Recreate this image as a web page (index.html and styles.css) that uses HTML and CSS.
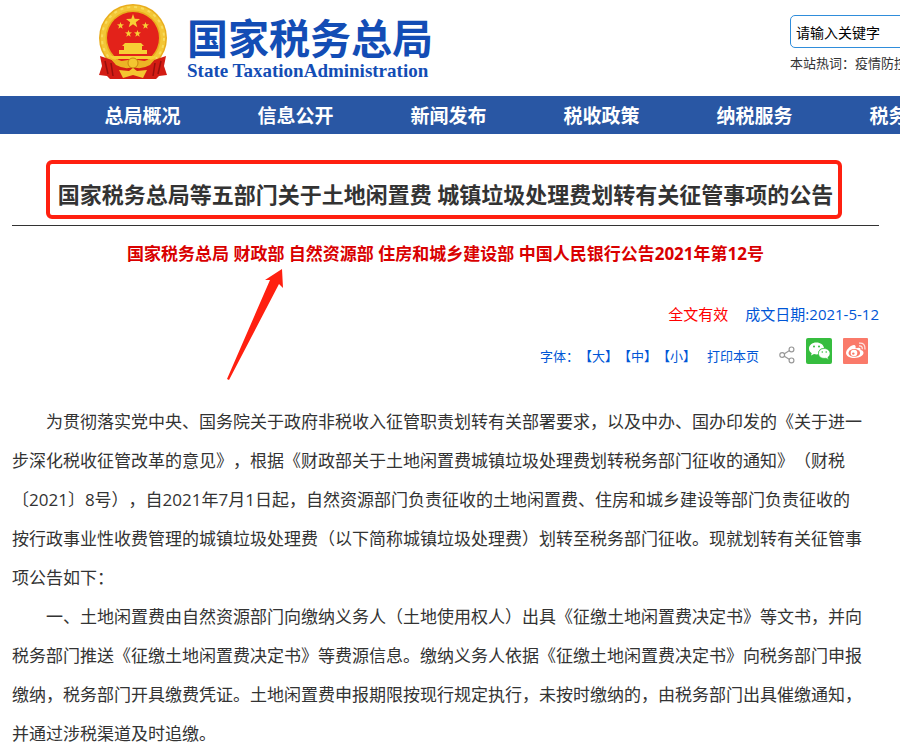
FILE: index.html
```html
<!doctype html>
<html lang="zh-CN">

<head>
  <meta charset="UTF-8">
  <meta name="viewport" content="width=device-width, initial-scale=1">
  <title>国家税务总局</title>
  <link rel="stylesheet" href="styles.css">
</head>

<body>
  <header class="header">
    <a class="logo" href="#">
      <svg class="emblem" viewBox="0 0 70 75" width="70" height="75" aria-hidden="true">
        <circle cx="35" cy="34" r="34" fill="#e9ad1d" />
        <circle cx="35" cy="34" r="30" fill="none" stroke="#f3c636" stroke-width="5" />
        <circle cx="35" cy="34" r="31" fill="none" stroke="#f8dc5c" stroke-width="2" stroke-dasharray="3 4" />
        <circle cx="35" cy="34" r="26" fill="#e3221a" />
        <g fill="#f7cf35">
          <path id="star" d="M35 10 L36.700 14.700 L42 15 L37.800 18.200 L39.300 23.300 L35 20.300 L30.700 23.300 L32.200 18.200 L28 15 L33.300 14.700 Z" />
          <use href="#star" transform="translate(5 13) scale(.5)" />
          <use href="#star" transform="translate(30 13) scale(.5)" />
          <use href="#star" transform="translate(13 21) scale(.5)" />
          <use href="#star" transform="translate(22 21) scale(.5)" />
          <path d="M27 39 H43 L46 42 H44 V46 H49 V50 H21 V46 H26 V42 H24 Z" />
          <path d="M12 52 H58 L56 55 H14 Z" />
        </g>
        <path d="M2 52 L14 56 Q22 63 35 61 Q48 63 56 56 L68 52 L66 62 L69 71 L61 72 L58 75 H12 L9 72 L1 71 L4 62 Z" fill="#d31c14" />
        <path d="M7 57 L10 70 M13 59 L15 72 M63 57 L60 70 M57 59 L55 72" stroke="#960f0d" stroke-width="1.500" fill="none" />
        <path d="M12 54 Q24 60 35 54 Q46 60 58 54 L52 61 Q43 66 35 63 Q27 66 18 61 Z" fill="#ecb425" />
        <circle cx="35" cy="59" r="5" fill="#f4c630" stroke="#c98510" />
        <path d="M21 66 L31 67 L35 64 L39 67 L49 66 L45 74 L35 71 L25 74 Z" fill="#f4c630" />
      </svg>
      <span class="logo-text">
        <span class="logo-cn">国家税务总局</span>
        <span class="logo-en">State TaxationAdministration</span>
      </span>
    </a>
    <form class="search">
      <input class="search-input" type="text" value="请输入关键字" aria-label="关键字">
      <p class="hot">本站热词：<a href="#">疫情防控</a></p>
    </form>
  </header>

  <nav class="nav">
    <a href="#">总局概况</a>
    <a href="#">信息公开</a>
    <a href="#">新闻发布</a>
    <a href="#">税收政策</a>
    <a href="#">纳税服务</a>
    <a href="#">税务文化</a>
  </nav>

  <article class="article">
    <h1 class="title">国家税务总局等五部门关于土地闲置费 城镇垃圾处理费划转有关征管事项的公告</h1>
    <h2 class="number">国家税务总局 财政部 自然资源部 住房和城乡建设部 中国人民银行公告2021年第12号
      <svg class="arrow" viewBox="0 0 58 112" width="58" height="112" aria-hidden="true">
        <path d="M0 110 L43 11 L38 11 L55 0 L56 19 L52 15 L2 111 Z" fill="#ff2010" />
      </svg>
    </h2>
    <p class="meta"><span class="valid">全文有效</span><span>成文日期:2021-5-12</span></p>
    <div class="tools">
      <div class="size">字体：<button type="button">【大】</button><button type="button">【中】</button><button type="button">【小】</button></div>
      <button type="button" class="print">打印本页</button>
      <a class="share" href="#" aria-label="分享">
        <svg viewBox="0 0 16 18" width="16" height="18" fill="none" stroke="#999" stroke-width="1.2">
          <path d="M5 8 L10.500 4.500 M5 10 L10.500 13.500" />
          <circle cx="3.200" cy="9" r="2.400" />
          <circle cx="12.500" cy="3.400" r="2.400" />
          <circle cx="12.500" cy="14.400" r="2.400" />
        </svg>
      </a>
      <a class="wechat" href="#" aria-label="微信">
        <svg viewBox="0 0 26 26" width="26" height="26">
          <rect width="26" height="26" rx="2" fill="#36bd3f" />
          <path d="M10.500 4.500 C6 4.500 3 7.200 3 10.500 C3 12.500 4 14 5.700 15.200 L5 17.500 L8 16 Q10 16.600 12 16.300 C12 12 15 10 18 10 C17.500 6.800 14.500 4.500 10.500 4.500 Z" fill="#fff" />
          <path d="M18 10.500 C14.800 10.500 12.500 12.700 12.500 15.500 C12.500 18.500 15.500 21 20 20.200 L22.400 21.400 L21.900 19.300 C23.200 18.300 24 17 24 15.500 C24 12.700 21.300 10.500 18 10.500 Z" fill="#fff" stroke="#36bd3f" stroke-width=".6" />
          <g fill="#36bd3f"><circle cx="8" cy="8.500" r="1" /><circle cx="13" cy="8.500" r="1" /><circle cx="16.300" cy="14" r=".8" /><circle cx="20.200" cy="14" r=".8" /></g>
        </svg>
      </a>
      <a class="weibo" href="#" aria-label="微博">
        <svg viewBox="0 0 25 26" width="25" height="26">
          <rect width="25" height="26" rx="1" fill="#fa7a6a" />
          <path d="M11 7 C8 7 3 11.500 3 15 C3 18 7 20 11.500 20 C17 20 20.500 17.500 20.500 14.800 C20.500 13 19 12.400 17.500 12 C18 10 17 8.800 12.500 10.300 C13 8.500 12.500 7 11 7 Z" fill="#fff" />
          <ellipse cx="11.300" cy="14.900" rx="5.800" ry="3.900" fill="#fa7a6a" />
          <circle cx="11" cy="15" r="3.300" fill="#fff" />
          <circle cx="10.300" cy="15.600" r="1.200" fill="#fa7a6a" />
          <path d="M16 8 Q19.500 7.500 19.300 11.200 M16 5.200 Q22.500 4.500 22 11.500" fill="none" stroke="#fff" stroke-opacity=".8" stroke-width="1.300" />
        </svg>
      </a>
    </div>
    <div class="content">
      <p>为贯彻落实党中央、国务院关于政府非税收入征管职责划转有关部署要求，以及中办、国办印发的《关于进一步深化税收征管改革的意见》，根据《财政部关于土地闲置费城镇垃圾处理费划转税务部门征收的通知》（财税〔2021〕8号），自2021年7月1日起，自然资源部门负责征收的土地闲置费、住房和城乡建设等部门负责征收的按行政事业性收费管理的城镇垃圾处理费（以下简称城镇垃圾处理费）划转至税务部门征收。现就划转有关征管事项公告如下：</p>
      <p>一、土地闲置费由自然资源部门向缴纳义务人（土地使用权人）出具《征缴土地闲置费决定书》等文书，并向税务部门推送《征缴土地闲置费决定书》等费源信息。缴纳义务人依据《征缴土地闲置费决定书》向税务部门申报缴纳，税务部门开具缴费凭证。土地闲置费申报期限按现行规定执行，未按时缴纳的，由税务部门出具催缴通知，并通过涉税渠道及时追缴。</p>
    </div>
  </article>
</body>

</html>
```

FILE: styles.css
```css
* {
  box-sizing: border-box;
}

body {
  margin: 0;
  overflow-x: hidden;
  background: #fff;
  color: #333;
  font-family: "Open Sans", "Noto Sans CJK SC", sans-serif;
  text-spacing-trim: space-all;
}

h1,
h2,
p {
  margin: 0;
}

a {
  color: inherit;
  text-decoration: none;
}

button {
  padding: 0;
  border: 0;
  background: none;
  color: inherit;
  font: inherit;
  cursor: pointer;
}

svg {
  display: block;
}

.header {
  display: flex;
  justify-content: space-between;
  height: 96px;
  margin-right: -90px;
  padding: 4px 0 0 98px;
}

.logo {
  display: flex;
  gap: 19px;
  color: #134db5;
}

.logo-text {
  display: flex;
  flex-direction: column;
  padding-top: 12px;
}

.logo-cn {
  font-size: 41px;
  font-weight: 700;
  line-height: 44px;
}

.logo-en {
  font: 700 19px/22px "Liberation Serif", serif;
}

.search {
  width: 200px;
  padding-top: 11px;
}

.search-input {
  display: block;
  width: 100%;
  height: 33px;
  padding: 0 5px;
  border: 1px solid #2f8ddb;
  border-radius: 5px;
  color: #000;
  font: inherit;
  font-size: 14px;
}

.hot {
  padding-top: 5px;
  font-size: 13px;
  line-height: 20px;
  white-space: nowrap;
}

.nav {
  display: flex;
  height: 38px;
  padding-left: 66px;
  overflow: hidden;
  background: #2957a4;
  color: #fff;
}

.nav a {
  flex: 0 0 153px;
  font-size: 19px;
  font-weight: 700;
  line-height: 40px;
  text-align: center;
}

.article {
  padding: 26px 21px 0 12px;
}

.title {
  position: relative;
  padding: 17px 0 14px;
  border-bottom: 1px solid #333;
  font-size: 22px;
  line-height: 34px;
  text-align: center;
  white-space: nowrap;
}

/* red frame round the title */
.title::after {
  content: "";
  position: absolute;
  inset: 0 37px 6px 34px;
  border: 4px solid #ff2010;
  border-radius: 6px;
}

.number {
  position: relative;
  padding-top: 15px;
  color: #d90000;
  font-size: 17px;
  line-height: 26px;
  text-align: center;
}

.arrow {
  position: absolute;
  top: 43px;
  left: 215px;
}

.meta {
  display: flex;
  justify-content: flex-end;
  gap: 17px;
  padding-top: 35px;
  color: #0056d6;
  font-size: 15px;
  line-height: 24px;
}

.valid {
  color: #f00;
}

.tools {
  display: flex;
  justify-content: flex-end;
  gap: 11px;
  padding: 12px 11px 0 0;
  color: #0056d6;
  font-size: 13px;
  line-height: 36px;
}

.print {
  margin-right: 9px;
}

.share {
  padding-top: 8px;
}

.content {
  padding: 28px 13px 0 0;
  font-size: 17px;
  line-height: 39px;
}

.content p {
  text-indent: 2em;
}
```
